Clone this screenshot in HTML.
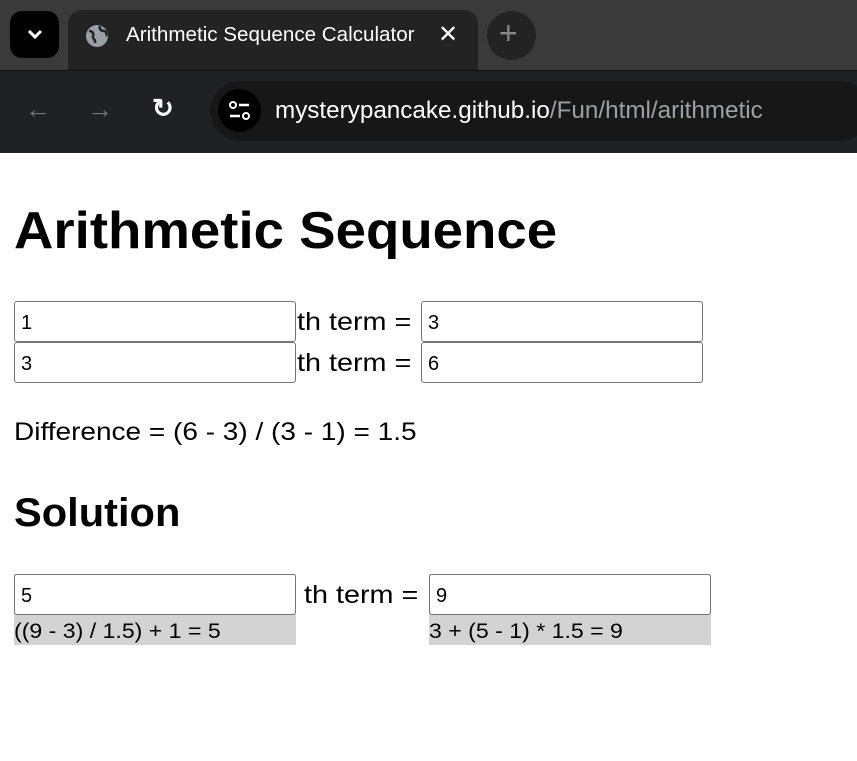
<!DOCTYPE html>
<html><head><meta charset="utf-8"><style>
body{margin:0;width:857px;height:761px;background:#fff;position:relative;overflow:hidden;font-family:"Liberation Sans",sans-serif}
.a{position:absolute}
.tabbar{left:0;top:0;width:857px;height:70px;background:#3a3a3a}
.tool{left:0;top:70px;width:857px;height:82px;background:#202124;border-top:1px solid #111}
.inp{position:absolute;box-sizing:border-box;border:1px solid #767676;border-radius:3px;background:#fff;height:41px;font-size:20px;padding-left:6px;line-height:43px;color:#000}
.t{position:absolute;font-size:25px;color:#000;white-space:nowrap;transform-origin:left top}
.g{position:absolute;background:#d3d3d3}
.sx{transform-origin:left top;white-space:nowrap}
</style></head><body>
<div class="a tabbar"></div>
<div class="a" style="left:10px;top:11px;width:49px;height:47px;background:#000;border-radius:12px"></div>
<svg class="a" style="left:25px;top:27px" width="20" height="14"><path d="M4 4l6 6 6-6" stroke="#fff" stroke-width="3" fill="none"/></svg>
<div class="a" style="left:68px;top:10px;width:410px;height:62px;background:#232323;border-radius:14px 14px 0 0"></div>
<svg class="a" style="left:85px;top:24px" width="24" height="24"><circle cx="12" cy="12" r="11" fill="#9aa0a6"/><path d="M4 7c3 0 5 2 4 5s3 3 2 7M15 2c-1 3 1 5 4 5s2 4 3 5" stroke="#232323" stroke-width="2.5" fill="none"/></svg>
<div class="a sx" style="left:126px;top:24px;font-size:20px;color:#fff;transform:scaleX(1.03)">Arithmetic Sequence Calculator</div>
<div class="a" style="left:438px;top:20px;font-size:24px;color:#fff">✕</div>
<div class="a" style="left:487px;top:11px;width:49px;height:49px;border-radius:50%;background:#232323"></div>
<div class="a" style="left:499px;top:15px;font-size:32px;color:#888">+</div>
<div class="a tool"></div>
<div class="a" style="left:25px;top:94px;font-size:26px;color:#777">←</div>
<div class="a" style="left:87px;top:94px;font-size:26px;color:#777">→</div>
<div class="a" style="left:152px;top:93px;font-size:26px;color:#fff;font-weight:bold">↻</div>
<div class="a" style="left:210px;top:81px;width:660px;height:60px;border-radius:30px;background:#171717"></div>
<div class="a" style="left:218px;top:89px;width:43px;height:43px;border-radius:50%;background:#000"></div>
<svg class="a" style="left:228px;top:100px" width="24" height="22"><circle cx="5" cy="5" r="3" stroke="#fff" stroke-width="2" fill="none"/><path d="M11 5h10M2 16h10" stroke="#fff" stroke-width="2.5"/><circle cx="18" cy="16" r="3" stroke="#fff" stroke-width="2" fill="none"/></svg>
<div class="a sx" style="left:275px;top:97px;font-size:24px;color:#fff;transform:scaleX(1.01)">mysterypancake.github.io<span style="color:#9aa0a6">/Fun/html/arithmetic</span></div>

<div class="a sx" style="left:14px;top:201px;font-size:52px;font-weight:bold;transform:scaleX(1.05)">Arithmetic Sequence</div>
<div class="inp" style="left:14px;top:301px;width:282px">1</div>
<div class="t" style="left:297px;top:308px;transform:scaleX(1.15)">th term =</div>
<div class="inp" style="left:421px;top:301px;width:282px">3</div>
<div class="inp" style="left:14px;top:342px;width:282px">3</div>
<div class="t" style="left:297px;top:349px;transform:scaleX(1.15)">th term =</div>
<div class="inp" style="left:421px;top:342px;width:282px">6</div>
<div class="t" style="left:14px;top:418px;transform:scaleX(1.12)">Difference = (6 - 3) / (3 - 1) = 1.5</div>
<div class="a sx" style="left:14px;top:491px;font-size:40px;font-weight:bold;transform:scaleX(1.04)">Solution</div>
<div class="g" style="left:14px;top:574px;width:282px;height:71px"></div>
<div class="inp" style="left:14px;top:574px;width:282px">5</div>
<div class="a sx" style="left:14px;top:620px;font-size:21px;transform:scaleX(1.1)">((9 - 3) / 1.5) + 1 = 5</div>
<div class="t" style="left:304px;top:581px;transform:scaleX(1.15)">th term =</div>
<div class="g" style="left:429px;top:574px;width:282px;height:71px"></div>
<div class="inp" style="left:429px;top:574px;width:282px">9</div>
<div class="a sx" style="left:429px;top:620px;font-size:21px;transform:scaleX(1.1)">3 + (5 - 1) * 1.5 = 9</div>
</body></html>
